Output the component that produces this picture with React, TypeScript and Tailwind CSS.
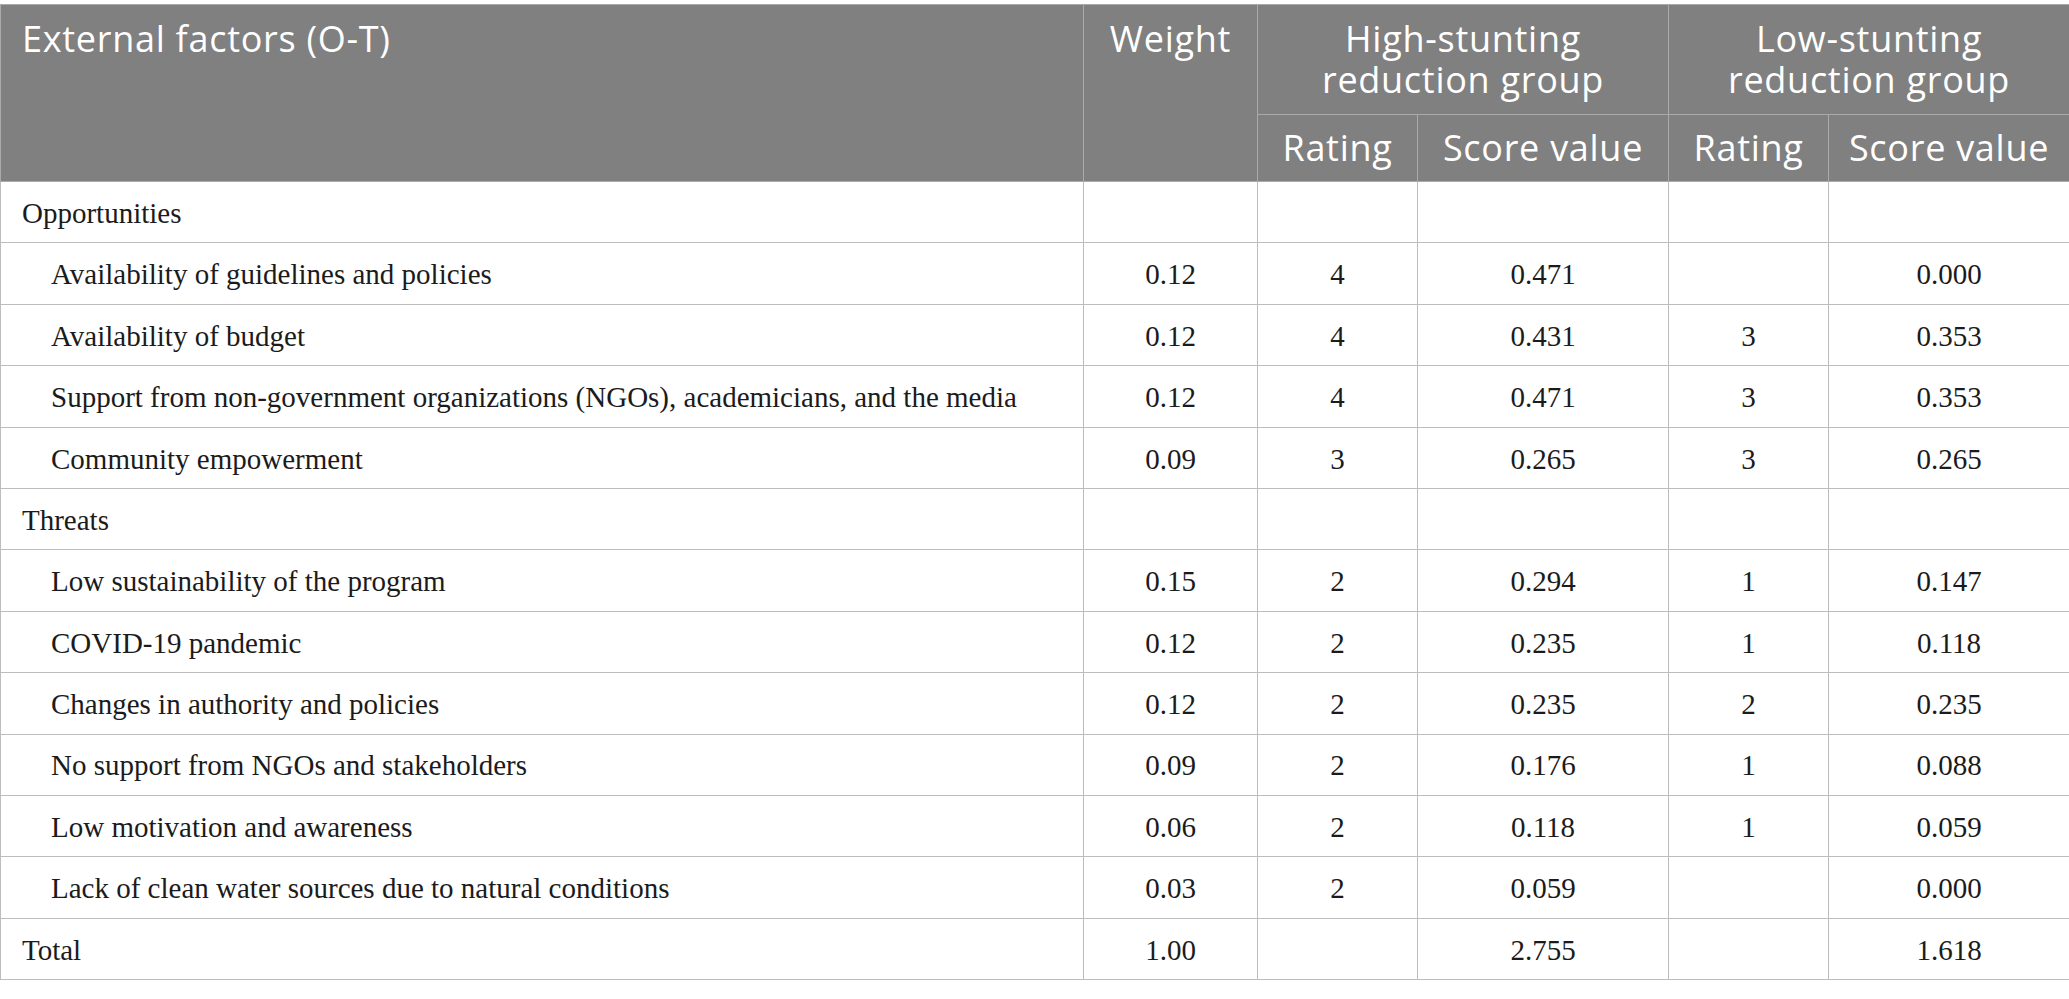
import React from 'react';

type Row = {
  label: string;
  indent?: boolean;
  weight?: string;
  hr?: string;
  hs?: string;
  lr?: string;
  ls?: string;
};

const rows: Row[] = [
  { label: 'Opportunities' },
  { label: 'Availability of guidelines and policies', indent: true, weight: '0.12', hr: '4', hs: '0.471', ls: '0.000' },
  { label: 'Availability of budget', indent: true, weight: '0.12', hr: '4', hs: '0.431', lr: '3', ls: '0.353' },
  { label: 'Support from non-government organizations (NGOs), academicians, and the media', indent: true, weight: '0.12', hr: '4', hs: '0.471', lr: '3', ls: '0.353' },
  { label: 'Community empowerment', indent: true, weight: '0.09', hr: '3', hs: '0.265', lr: '3', ls: '0.265' },
  { label: 'Threats' },
  { label: 'Low sustainability of the program', indent: true, weight: '0.15', hr: '2', hs: '0.294', lr: '1', ls: '0.147' },
  { label: 'COVID-19 pandemic', indent: true, weight: '0.12', hr: '2', hs: '0.235', lr: '1', ls: '0.118' },
  { label: 'Changes in authority and policies', indent: true, weight: '0.12', hr: '2', hs: '0.235', lr: '2', ls: '0.235' },
  { label: 'No support from NGOs and stakeholders', indent: true, weight: '0.09', hr: '2', hs: '0.176', lr: '1', ls: '0.088' },
  { label: 'Low motivation and awareness', indent: true, weight: '0.06', hr: '2', hs: '0.118', lr: '1', ls: '0.059' },
  { label: 'Lack of clean water sources due to natural conditions', indent: true, weight: '0.03', hr: '2', hs: '0.059', ls: '0.000' },
  { label: 'Total', weight: '1.00', hs: '2.755', ls: '1.618' },
];

const head = "border border-[#a9aaa9] font-['Open_Sans',sans-serif] text-[36px] tracking-[0.02em] text-white font-normal";
const cell = 'border border-[#bdbdbd] text-center pt-[3px]';

export default function App() {
  return (
    <div className="bg-white w-[2069px] h-[999px] pt-[4px]">
      <table className="w-[2069px] table-fixed border-collapse font-['Liberation_Serif',serif] text-[29px] text-[#1b1b1b]">
        <colgroup>
          <col className="w-[1083px]" />
          <col className="w-[174px]" />
          <col className="w-[160px]" />
          <col className="w-[251px]" />
          <col className="w-[160px]" />
          <col className="w-[241px]" />
        </colgroup>
        <thead className="bg-[#7f807f]">
          <tr className="h-[110px]">
            <th rowSpan={2} className={`${head} text-left align-top pl-[21px] pt-[13px] leading-[41px]`}>
              External factors (O-T)
            </th>
            <th rowSpan={2} className={`${head} align-top pt-[13px] leading-[41px]`}>
              Weight
            </th>
            <th colSpan={2} className={`${head} align-top pt-[13px] leading-[41px]`}>
              High-stunting
              <br />
              reduction group
            </th>
            <th colSpan={2} className={`${head} align-top pt-[13px] leading-[41px]`}>
              Low-stunting
              <br />
              reduction group
            </th>
          </tr>
          <tr className="h-[67px]">
            <th className={head}>Rating</th>
            <th className={head}>Score value</th>
            <th className={head}>Rating</th>
            <th className={head}>Score value</th>
          </tr>
        </thead>
        <tbody>
          {rows.map((r, i) => (
            <tr key={i} className="h-[61.4px]">
              <td className={`border border-[#bdbdbd] text-left pt-[3px] ${r.indent ? 'pl-[50px]' : 'pl-[21px]'}`}>{r.label}</td>
              <td className={cell}>{r.weight}</td>
              <td className={cell}>{r.hr}</td>
              <td className={cell}>{r.hs}</td>
              <td className={cell}>{r.lr}</td>
              <td className={cell}>{r.ls}</td>
            </tr>
          ))}
        </tbody>
      </table>
    </div>
  );
}
